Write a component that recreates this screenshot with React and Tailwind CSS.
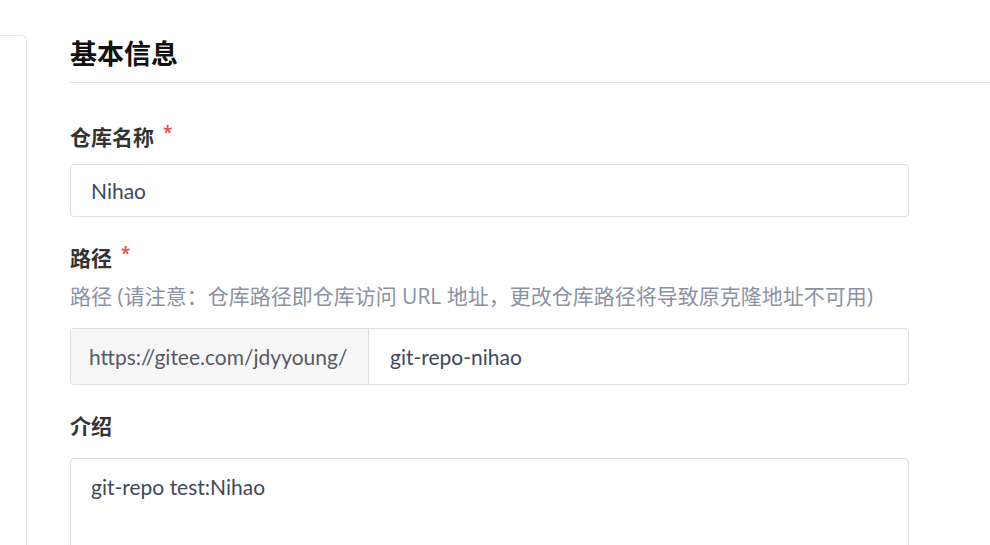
import React from 'react';

const font = { fontFamily: '"Open Sans", "Noto Sans CJK SC", sans-serif' };
const valueFont = { fontFamily: 'Lato, "Noto Sans CJK SC", sans-serif' };

const Label = ({ children, required }) => (
  <div className="flex items-start h-[32px] text-[21px] leading-[32px] font-bold text-[#333333]">
    <span>{children}</span>
    {required && <span className="ml-[9px] text-[17px] leading-[17px] text-[#e05a52] mt-[3px]">*</span>}
  </div>
);

export default function App() {
  return (
    <div className="w-[990px] h-[545px] overflow-hidden bg-white flex" style={font}>
      <div className="w-[27px] mt-[35px] border-t border-r border-[#e6e6e6] rounded-tr-[6px] shrink-0" />
      <div className="flex-1 pl-[43px] pt-[34px]">
        <div className="border-b border-[#e1e1e1] pb-[8px]">
          <h2 className="text-[27px] leading-[40px] font-bold text-[#111111]">基本信息</h2>
        </div>

        <div className="w-[839px]">
          <div className="mt-[38px]">
            <Label required>仓库名称</Label>
          </div>
          <div className="mt-[11px] h-[53px] border border-[#dcdde3] rounded-[4px] px-[20px] flex items-center text-[21px] text-[#40485b]" style={valueFont}>
            Nihao
          </div>

          <div className="mt-[25px]">
            <Label required>路径</Label>
          </div>
          <p className="mt-[6px] text-[21px] leading-[32px] text-[#8c92a4]">
            路径 (请注意：仓库路径即仓库访问 URL 地址，更改仓库路径将导致原克隆地址不可用)
          </p>
          <div className="mt-[16px] h-[57px] border border-[#dcdde3] rounded-[4px] flex text-[21px] overflow-hidden" style={valueFont}>
            <div className="w-[298px] bg-[#f7f7f7] border-r border-[#dcdde3] flex items-center pl-[18px] text-[#555a66]">
              https://gitee.com/jdyyoung/
            </div>
            <div className="flex-1 flex items-center pl-[21px] text-[#40485b]">git-repo-nihao</div>
          </div>

          <div className="mt-[25px]">
            <Label>介绍</Label>
          </div>
          <div className="mt-[16px] h-[150px] border border-[#dcdde3] rounded-[4px] px-[20px] pt-[12px] text-[21px] leading-[32px] text-[#40485b]" style={valueFont}>
            git-repo test:Nihao
          </div>
        </div>
      </div>
    </div>
  );
}
